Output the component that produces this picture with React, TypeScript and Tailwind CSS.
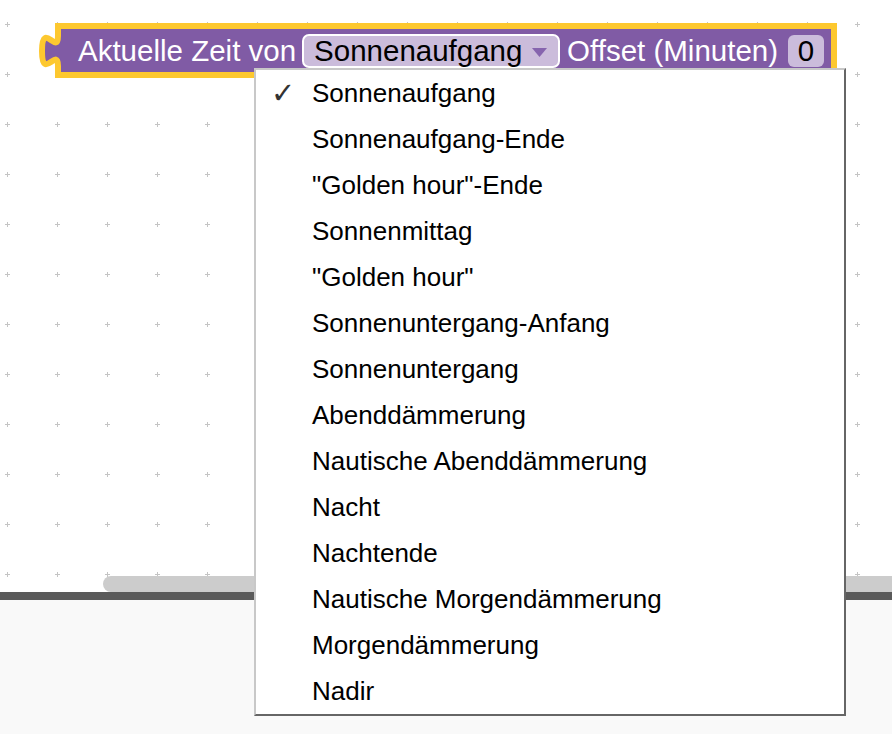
import React from "react";

const items = [
  "Sonnenaufgang",
  "Sonnenaufgang-Ende",
  "\"Golden hour\"-Ende",
  "Sonnenmittag",
  "\"Golden hour\"",
  "Sonnenuntergang-Anfang",
  "Sonnenuntergang",
  "Abenddämmerung",
  "Nautische Abenddämmerung",
  "Nacht",
  "Nachtende",
  "Nautische Morgendämmerung",
  "Morgendämmerung",
  "Nadir",
];

function Grid() {
  return (
    <svg className="absolute inset-0" width="892" height="592">
      <defs>
        <pattern id="grid" x="-18" y="-1" width="50" height="50" patternUnits="userSpaceOnUse">
          <rect x="23" y="25" width="5" height="1" fill="#c4c4c4" />
          <rect x="25" y="23" width="1" height="5" fill="#c4c4c4" />
        </pattern>
      </defs>
      <rect x="0" y="0" width="892" height="592" fill="url(#grid)" />
    </svg>
  );
}

function Block() {
  return (
    <>
      <div className="absolute left-[55px] top-[23px] w-[782px] h-[55px] border-[6px] border-[#fdc82f] bg-[#805ba5] flex items-center pl-[17px] text-white text-[29.5px] leading-none whitespace-nowrap">
        <span>Aktuelle Zeit von</span>
        <div className="ml-[6px] w-[258px] h-[34px] shrink-0 rounded-[7px] border-2 border-white bg-[#cbbcdb] flex items-center pl-[10px] pr-[11px] text-black">
          <span>Sonnenaufgang</span>
          <svg className="ml-auto mt-[4px]" width="15" height="9" viewBox="0 0 15 9">
            <path d="M0 0H15L7.5 9Z" fill="#8664ae" />
          </svg>
        </div>
        <span className="ml-[7px]">Offset (Minuten)</span>
        <div className="ml-auto mr-[7px] w-[36px] h-[32px] shrink-0 rounded-[6px] bg-[#cbbcdb] text-black flex items-center justify-center">
          0
        </div>
      </div>
      <svg className="absolute left-[30px] top-[20px]" width="40" height="60" viewBox="30 20 40 60">
        <rect x="55" y="36" width="7" height="30" fill="#805ba5" />
        <path d="M58 36 c0 20 -16 -16 -16 15 s16 -5 16 15" fill="#805ba5" stroke="#fdc82f" strokeWidth="6" />
      </svg>
    </>
  );
}

function Menu() {
  return (
    <div className="absolute left-[254px] top-[68px] w-[592px] bg-white border-2 border-t-[#c8c8c8] border-l-[#c8c8c8] border-r-[#666666] border-b-[#666666] flex flex-col">
      {items.map((it, i) => (
        <div key={i} className="h-[46px] flex items-center text-[26px] text-black leading-none whitespace-nowrap">
          <span className="w-[56px] shrink-0 pl-[15px] text-[#333333] text-[29px] font-['DejaVu_Sans',sans-serif]">
            {i === 0 ? "✓" : ""}
          </span>
          <span>{it}</span>
        </div>
      ))}
    </div>
  );
}

export default function App() {
  return (
    <div className="relative w-[892px] h-[734px] overflow-hidden flex flex-col bg-[#f9f9f9] font-['Liberation_Sans',Arial,Helvetica,sans-serif]">
      <div className="relative h-[592px] shrink-0 bg-white overflow-hidden">
        <Grid />
        <Block />
        <div className="absolute left-[103px] top-[576px] h-4 w-[820px] rounded-full bg-[#cccccc]" />
      </div>
      <div className="h-2 shrink-0 bg-[#5a5a5a]" />
      <div className="flex-1 bg-[#f9f9f9]" />
      <Menu />
    </div>
  );
}
